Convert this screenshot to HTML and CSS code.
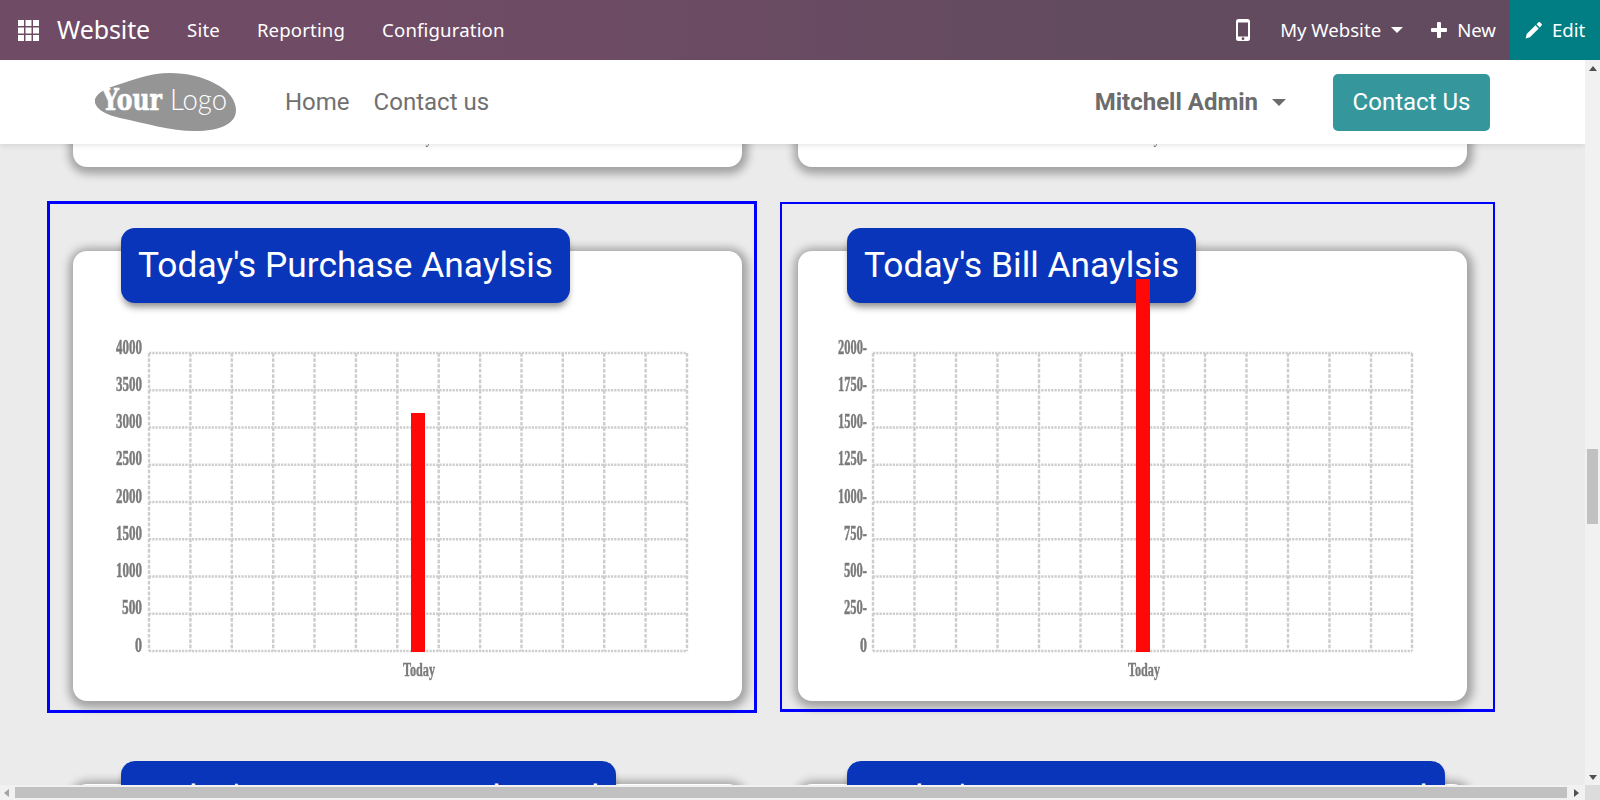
FILE: index.html
```html
<!DOCTYPE html>
<html lang="en">
<head>
<meta charset="utf-8">
<title>Website</title>
<link rel="stylesheet" href="styles.css">
</head>
<body>
<nav class="topbar">
  <svg class="apps" viewBox="0 0 21 21"><path d="M0 0h6v6H0zM7.500 0h6v6h-6zM15 0h6v6h-6zM0 7.500h6v6H0zM7.500 7.500h6v6h-6zM15 7.500h6v6h-6zM0 15h6v6H0zM7.500 15h6v6h-6zM15 15h6v6h-6z"/></svg>
  <span class="brand">Website</span>
  <ul class="menu">
    <li>Site</li>
    <li>Reporting</li>
    <li>Configuration</li>
  </ul>
  <div class="topbar-right">
    <svg class="phone" viewBox="0 0 14 22"><path fill-rule="evenodd" d="M2.500 0h9A2.500 2.500 0 0 1 14 2.500v17a2.500 2.500 0 0 1-2.500 2.500h-9A2.500 2.500 0 0 1 0 19.500v-17A2.500 2.500 0 0 1 2.500 0zM2 3.500V17.500h10V3.500zM7 18.300a1.400 1.400 0 1 0 0 2.800 1.400 1.400 0 0 0 0-2.800z"/></svg>
    <span class="site-switch">My Website</span>
    <i class="caret caret-top"></i>
    <svg class="plus" viewBox="0 0 16 16"><path d="M6 1a1 1 0 0 1 1-1h2a1 1 0 0 1 1 1v5h5a1 1 0 0 1 1 1v2a1 1 0 0 1-1 1h-5v5a1 1 0 0 1-1 1H7a1 1 0 0 1-1-1v-5H1a1 1 0 0 1-1-1V7a1 1 0 0 1 1-1h5z"/></svg>
    <span class="new">New</span>
    <a class="edit">
      <svg class="pencil" viewBox="0 0 17 17"><path d="M13.200.600a1.500 1.500 0 0 1 2.100 0l1.100 1.100a1.500 1.500 0 0 1 0 2.100l-1.700 1.700-3.200-3.200zM10.500 3.300l3.200 3.200-8.800 8.800L.6 16.400l1.100-4.300z"/></svg>
      <span>Edit</span>
    </a>
  </div>
</nav>

<div class="workspace">
  <main class="viewport">
    <header class="site-header">
      <svg class="logo" viewBox="0 0 142 60">
        <path class="logo-blob" d="M0 27C3 20 12 16 22 13 42 7 55 1 75 1c33 0 66 16 66 37 0 14-16 21-41 21-25 0-50-8-75-13C10 43-2 36 0 27z"/>
        <text class="logo-your" x="7" y="38" textLength="60" lengthAdjust="spacingAndGlyphs">Your</text>
        <text class="logo-logo" x="75" y="38" textLength="57" lengthAdjust="spacingAndGlyphs">Logo</text>
      </svg>
      <a class="nav-link nav-home">Home</a>
      <a class="nav-link">Contact us</a>
      <span class="user">Mitchell Admin</span>
      <i class="caret caret-user"></i>
      <a class="contact-btn">Contact Us</a>
    </header>

    <section class="stub-row">
      <div class="stub-card stub-a"><span class="stub-label">Today</span></div>
      <div class="stub-card stub-b"><span class="stub-label">Today</span></div>
    </section>

    <section class="row">
      <article class="panel panel-a outlined">
        <h2 class="pill">Today's Purchase Anaylsis</h2>
        <div class="card">
          <svg class="chart" viewBox="0 0 669 450">
            <g class="grid h">
              <path d="M76 102H614M76 139.300H614M76 176.500H614M76 213.800H614M76 251H614M76 288.300H614M76 325.500H614M76 362.800H614M76 400H614"/>
            </g>
            <g class="grid v">
              <path d="M76 102V400M117.400 102V400M158.800 102V400M200.200 102V400M241.500 102V400M282.900 102V400M324.300 102V400M365.700 102V400M407.100 102V400M448.500 102V400M489.800 102V400M531.200 102V400M572.600 102V400M614 102V400"/>
            </g>
            <rect class="bar" x="338" y="162" width="14" height="239"/>
            <g class="ticks">
              <text x="69" y="102" textLength="26" lengthAdjust="spacingAndGlyphs">4000</text>
              <text x="69" y="139" textLength="26" lengthAdjust="spacingAndGlyphs">3500</text>
              <text x="69" y="176" textLength="26" lengthAdjust="spacingAndGlyphs">3000</text>
              <text x="69" y="213" textLength="26" lengthAdjust="spacingAndGlyphs">2500</text>
              <text x="69" y="251" textLength="26" lengthAdjust="spacingAndGlyphs">2000</text>
              <text x="69" y="288" textLength="26" lengthAdjust="spacingAndGlyphs">1500</text>
              <text x="69" y="325" textLength="26" lengthAdjust="spacingAndGlyphs">1000</text>
              <text x="69" y="362" textLength="20" lengthAdjust="spacingAndGlyphs">500</text>
              <text x="69" y="400" textLength="7" lengthAdjust="spacingAndGlyphs">0</text>
            </g>
            <text class="today" x="346" y="425" textLength="32" lengthAdjust="spacingAndGlyphs">Today</text>
          </svg>
        </div>
      </article>

      <article class="panel panel-b outlined">
        <h2 class="pill">Today's Bill Anaylsis</h2>
        <div class="card">
          <svg class="chart" viewBox="0 0 669 450">
            <g class="grid h">
              <path d="M75 102H614M75 139.300H614M75 176.500H614M75 213.800H614M75 251H614M75 288.300H614M75 325.500H614M75 362.800H614M75 400H614"/>
            </g>
            <g class="grid v">
              <path d="M75 102V400M116.500 102V400M158 102V400M199.500 102V400M241 102V400M282.500 102V400M324 102V400M365.500 102V400M407 102V400M448.500 102V400M490 102V400M531.500 102V400M573 102V400M614 102V400"/>
            </g>
            <rect class="bar" x="338" y="28" width="14" height="373"/>
            <g class="ticks">
              <text x="69" y="102" textLength="29" lengthAdjust="spacingAndGlyphs">2000-</text>
              <text x="69" y="139" textLength="29" lengthAdjust="spacingAndGlyphs">1750-</text>
              <text x="69" y="176" textLength="29" lengthAdjust="spacingAndGlyphs">1500-</text>
              <text x="69" y="213" textLength="29" lengthAdjust="spacingAndGlyphs">1250-</text>
              <text x="69" y="251" textLength="29" lengthAdjust="spacingAndGlyphs">1000-</text>
              <text x="69" y="288" textLength="23" lengthAdjust="spacingAndGlyphs">750-</text>
              <text x="69" y="325" textLength="23" lengthAdjust="spacingAndGlyphs">500-</text>
              <text x="69" y="362" textLength="23" lengthAdjust="spacingAndGlyphs">250-</text>
              <text x="69" y="400" textLength="7" lengthAdjust="spacingAndGlyphs">0</text>
            </g>
            <text class="today" x="346" y="425" textLength="32" lengthAdjust="spacingAndGlyphs">Today</text>
          </svg>
        </div>
      </article>
    </section>

    <section class="row">
      <article class="panel panel-a">
        <h2 class="pill">Today's Customer Credit Paid</h2>
        <div class="card"></div>
      </article>
      <article class="panel panel-b">
        <h2 class="pill">Today's Customer Invoices Not Paid</h2>
        <div class="card"></div>
      </article>
    </section>
  </main>

  <div class="vbar">
    <i class="arrow arrow-up"></i>
    <div class="vtrack"><div class="vthumb"></div></div>
    <i class="arrow arrow-down"></i>
  </div>
  <div class="hbar">
    <i class="arrow arrow-left"></i>
    <div class="hthumb"></div>
    <i class="arrow arrow-right"></i>
  </div>
  <div class="corner"></div>
</div>
</body>
</html>
```
FILE: styles.css
```css
* { box-sizing: border-box; }
html, body { height: 100%; }
body {
  margin: 0;
  overflow: hidden;
  display: flex;
  flex-direction: column;
  font-family: "Roboto", sans-serif;
  background: #ebebeb;
}

/* top bar */
.topbar {
  height: 60px;
  flex: none;
  display: flex;
  align-items: center;
  padding-left: 18px;
  color: #fff;
  font-family: "Noto Sans", sans-serif;
  background: linear-gradient(90deg, #704b66 0%, #6e4b65 35%, #624b5f 70%);
  position: relative;
  z-index: 5;
}
.apps { width: 21px; height: 21px; fill: #fff; flex: none; }
.brand { font-size: 25px; margin-left: 18px; letter-spacing: -.1px; padding-bottom: 2px; }
.menu { list-style: none; display: flex; gap: 37px; margin: 0 0 0 37px; padding: 0 0 2px; font-size: 18.600px; letter-spacing: .15px; }
.topbar-right { margin-left: auto; display: flex; align-items: center; height: 100%; font-size: 18.600px; }
.topbar-right span { padding-bottom: 2px; }
.phone { width: 14px; height: 22px; fill: #fff; }
.site-switch { margin-left: 30px; }
.caret { display: block; width: 0; height: 0; border-style: solid; border-color: currentColor transparent transparent; }
.caret-top { border-width: 6px 6px 0; margin-left: 10px; }
.plus { width: 16px; height: 16px; fill: #fff; margin-left: 28px; }
.new { margin-left: 10px; margin-right: 14px; }
.edit { height: 100%; width: 90px; background: #017e84; display: flex; align-items: center; padding-left: 15px; gap: 10px; }
.pencil { width: 17px; height: 17px; fill: #fff; flex: none; }

/* browser frame */
.workspace {
  flex: 1;
  min-height: 0;
  display: grid;
  grid-template-columns: 1585px 15px;
  grid-template-rows: 725px 15px;
}
.viewport { overflow: hidden; position: relative; background: #ebebeb; }

/* site header */
.site-header {
  position: relative;
  z-index: 4;
  height: 84px;
  background: #fff;
  box-shadow: 0 1px 6px rgba(0, 0, 0, .12);
  display: flex;
  align-items: center;
  padding-left: 95px;
  color: #707070;
  font-size: 24px;
}
.logo { width: 142px; height: 60px; flex: none; margin-right: 48px; }
.logo-blob { fill: #959595; }
.logo-your { fill: #fff; stroke: #fff; stroke-width: .7px; font: 700 30px "DejaVu Serif", serif; }
.logo-logo { fill: #fff; font: 300 30px "Lato", sans-serif; }
.nav-home { margin-right: 24px; }
.user { margin-left: auto; font-weight: 700; color: #6c6c6c; }
.caret-user { border-width: 7px 7px 0; margin-left: 14px; color: #6c6c6c; }
.contact-btn {
  margin-left: 47px;
  margin-right: 95px;
  width: 157px;
  height: 57px;
  background: #35979c;
  border-radius: 5px;
  color: #fff;
  display: flex;
  align-items: center;
  justify-content: center;
}

/* stub row: the bottoms of the row above, scrolled under the header */
.stub-row { display: grid; grid-template-columns: 669px 669px; column-gap: 56px; padding-left: 73px; margin-top: -37px; }
.stub-card {
  height: 60px;
  background: #fff;
  border-radius: 14px;
  box-shadow: 1px 2px 8px 5px rgba(0, 0, 0, .31);
  display: flex;
  align-items: flex-end;
  padding-bottom: 20px;
}
.stub-label { font: 700 16px "Liberation Serif", serif; color: #777; transform: scaleX(.8); }
.stub-a .stub-label { margin-left: 321px; }
.stub-b .stub-label { margin-left: 324px; }

/* chart rows */
.row { display: grid; grid-template-columns: 710px 715px; column-gap: 23px; padding-left: 47px; align-items: start; }
.stub-row + .row { margin-top: 34px; }
.row + .row { margin-top: 21px; }
.panel { border: 3px solid transparent; padding: 24px 12px 9px 23px; }
.panel-b { border-width: 2px 2px 3px; padding-left: 16px; margin-top: 1px; padding-right: 26px; padding-bottom: 8px; }
.outlined { border-color: #0000ff; }
.pill {
  position: relative;
  z-index: 1;
  width: fit-content;
  height: 75px;
  margin: 0 0 -52px 48px;
  padding: 0 17px;
  background: #0935bb;
  border-radius: 14px;
  color: #fff;
  font-size: 35.300px;
  font-weight: 400;
  line-height: 74px;
  white-space: nowrap;
  box-shadow: 0 6px 7px -2px rgba(0, 0, 0, .45);
}
.panel-b .pill { margin-left: 49px; }
.card {
  height: 450px;
  background: #fff;
  border-radius: 14px;
  box-shadow: 1px 2px 8px 5px rgba(0, 0, 0, .31);
}
.chart { display: block; width: 669px; height: 450px; overflow: visible; position: relative; z-index: 2; }
.grid path { fill: none; stroke: #cdcdcd; stroke-width: 2.400; }
.grid.h path { stroke-dasharray: 2.200 1.100; }
.grid.v path { stroke-dasharray: 3.700 1.600; }
.bar { fill: #ff0808; }
.ticks { transform: translateY(1px); }
.ticks text { font: 700 20px "Liberation Serif", serif; fill: #7a7a7a; stroke: #7a7a7a; stroke-width: .5px; text-anchor: end; filter: blur(.5px); }
.today { font: 700 18px "Liberation Serif", serif; fill: #7a7a7a; stroke: #7a7a7a; stroke-width: .4px; text-anchor: middle; filter: blur(.45px); }

/* scrollbars */
.vbar { background: #f1f1f1; display: flex; flex-direction: column; align-items: center; justify-content: space-between; padding: 6px 0 5px; }
.vtrack { flex: 1; width: 100%; padding: 378px 2px 0; }
.vthumb { height: 75px; background: #c1c1c1; }
.hbar { background: #f1f1f1; display: flex; align-items: center; padding: 0 6px 0 4px; }
.hthumb { flex: 1; height: 11px; margin: 0 7px 0 6px; background: #c1c1c1; }
.corner { background: #dcdcdc; }
.arrow { display: block; width: 0; height: 0; border-style: solid; border-color: transparent; }
.arrow-up { border-width: 0 4.500px 5px; border-bottom-color: #505050; }
.arrow-down { border-width: 5px 4.500px 0; border-top-color: #505050; }
.arrow-left { border-width: 4.500px 5px 4.500px 0; border-right-color: #a3a3a3; }
.arrow-right { border-width: 4.500px 0 4.500px 5px; border-left-color: #505050; }
```
